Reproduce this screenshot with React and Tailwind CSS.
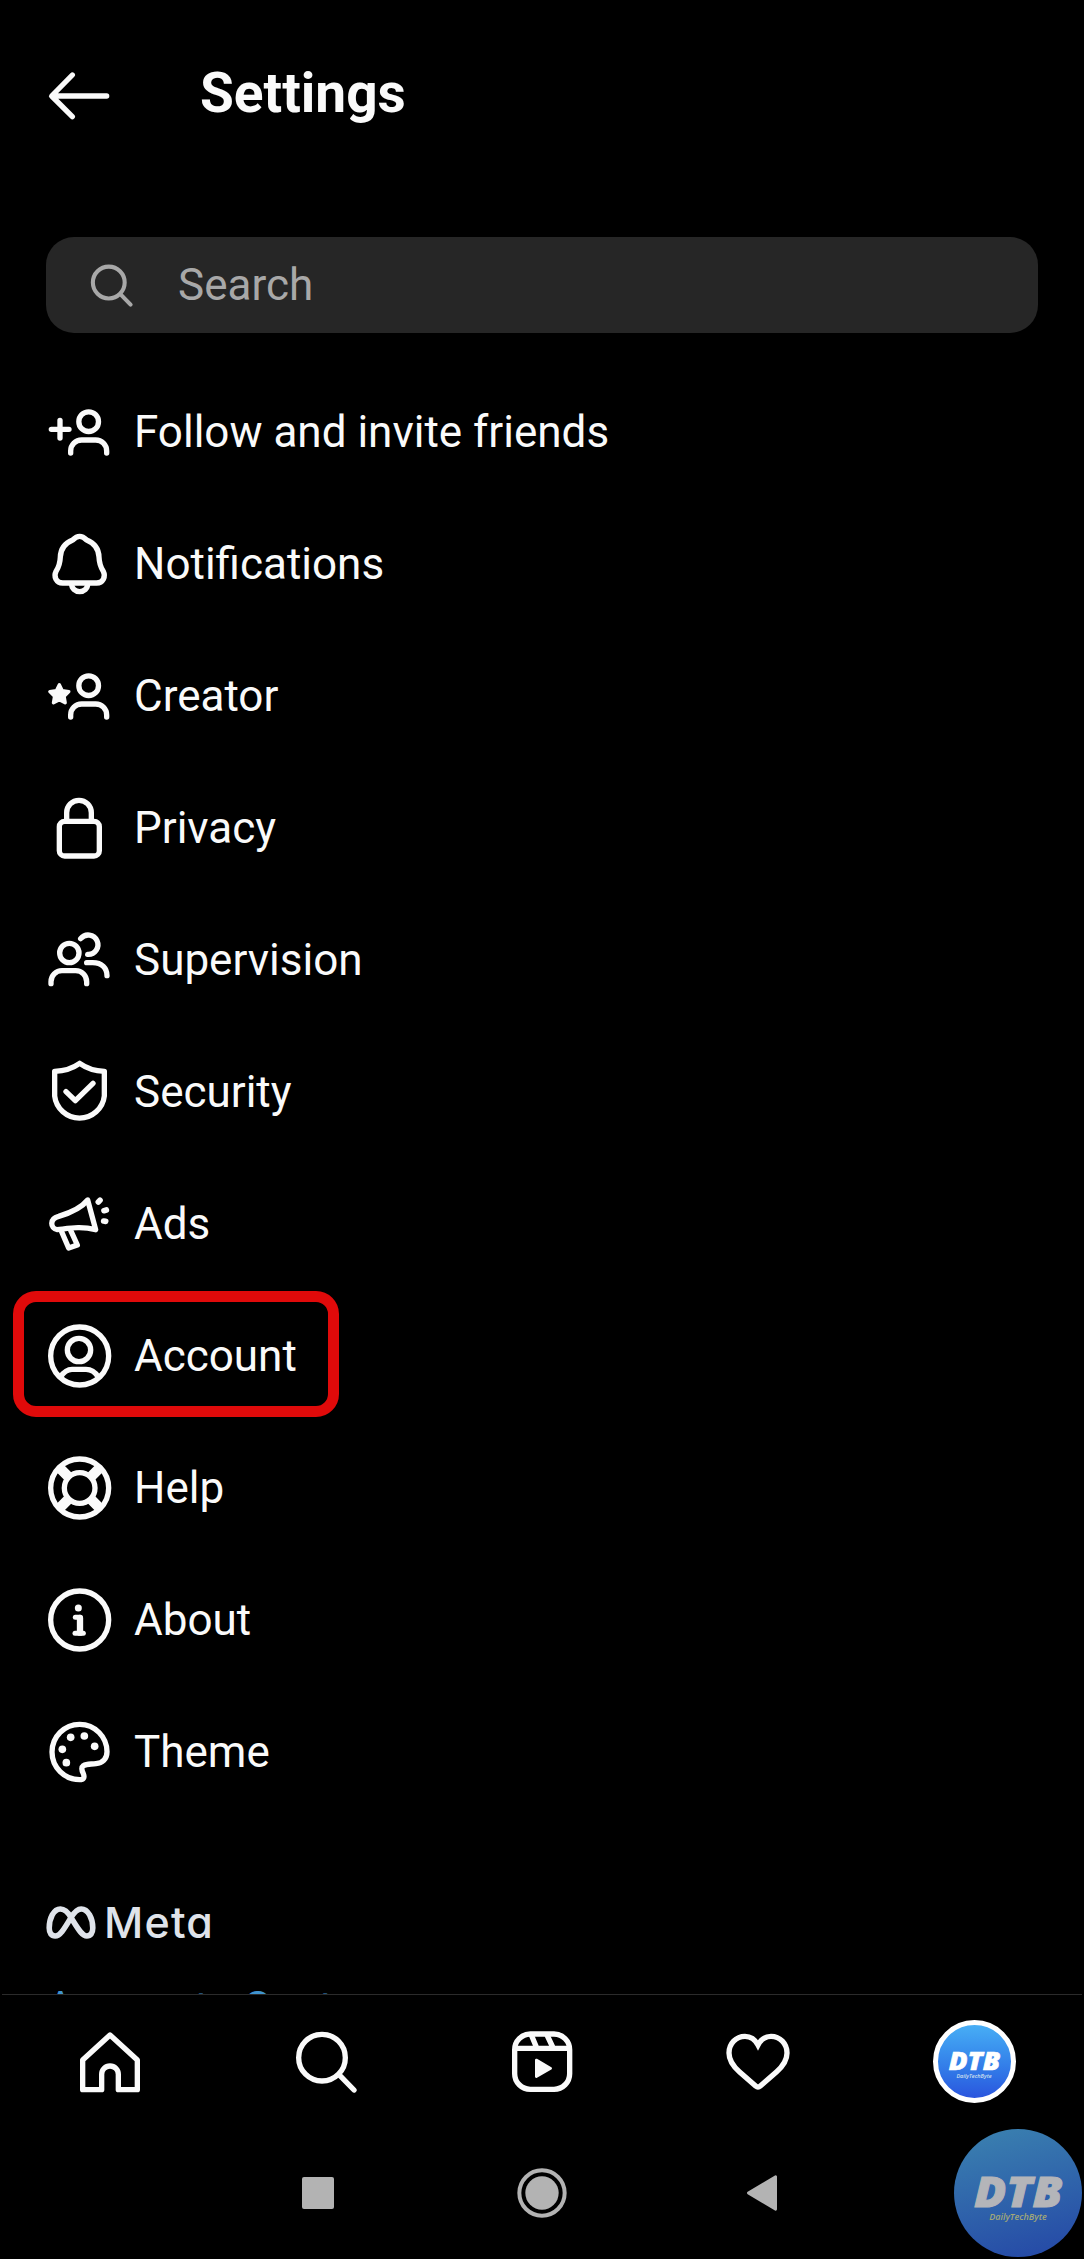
import React from "react";

// Icons are drawn on a 198-unit grid, three units to a pixel.
function Icon({ children, className = "size-[66px]", sw = 16 }) {
  return (
    <svg
      viewBox="0 0 198 198"
      className={`${className} shrink-0`}
      fill="none"
      stroke="currentColor"
      strokeWidth={sw}
      strokeLinecap="round"
      strokeLinejoin="round"
    >
      {children}
    </svg>
  );
}

const Person = () => (
  <>
    <circle cx="128" cy="68" r="29.5" />
    <path d="M74 162V156A33 33 0 0 1 107 123H149A33 33 0 0 1 182 156V162" />
  </>
);

const rows = [
  {
    label: "Follow and invite friends",
    icon: (
      <>
        <Person />
        <path d="M16 91H69M42 64V117" />
      </>
    ),
  },
  {
    label: "Notifications",
    icon: (
      <>
        <path d="M101 16C91 16 86 21 80 27C58 36 44 50 43 78C42 103 36 111 30 121C22 137 31 156 50 156H152C171 156 180 137 172 121C166 111 160 103 159 78C158 50 144 36 122 27C116 21 111 16 101 16Z" />
        <path d="M77 160A24 22 0 0 0 125 160" />
      </>
    ),
  },
  {
    label: "Creator",
    icon: (
      <>
        <Person />
        <path
          d="M40 65L48.8 82.9L68.5 85.7L54.3 99.6L57.6 119.3L40 110L22.4 119.3L25.7 99.6L11.5 85.7L31.2 82.9Z"
          fill="currentColor"
          strokeWidth="10"
        />
      </>
    ),
  },
  {
    label: "Privacy",
    icon: (
      <>
        <rect x="40" y="79" width="120" height="104" rx="16" />
        <path d="M62 79V53A37 37 0 0 1 136 53V79" />
      </>
    ),
  },
  {
    label: "Supervision",
    icon: (
      <>
        <circle cx="70" cy="78" r="29" />
        <path d="M15 170V164A33 33 0 0 1 48 131H89A33 33 0 0 1 122 164V170" />
        <path d="M104 35A29 29 0 1 1 125 82M122 107H140C168 107 183 124 183 146" />
      </>
    ),
  },
  {
    label: "Security",
    icon: (
      <>
        <path d="M101 13C80 28 55 36 26 37V111A75 75 0 0 0 175 111V37C147 36 122 28 101 13Z" />
        <path d="M60 98L88 125L141 73" />
      </>
    ),
  },
  {
    label: "Ads",
    icon: (
      <>
        <path d="M125 27C106 51 72 66 38 76C10 83 12 112 34 116C70 112 104 105 149 116Z" />
        <path d="M46 120L68 171L94 162L74 118" />
        <path d="M157 33L162 28M174 59L181 57M173 90L179 91" strokeWidth="17" />
      </>
    ),
  },
  {
    label: "Account",
    marked: true,
    icon: (
      <>
        <circle cx="101" cy="99" r="87" />
        <circle cx="99" cy="81" r="35" />
        <path d="M44 161C54 146 62 139 78 139H120C136 139 147 146 156 161" />
      </>
    ),
  },
  {
    label: "Help",
    icon: (
      <>
        <circle cx="101" cy="99" r="87" />
        <circle cx="101" cy="99" r="46" />
        <path
          d="M66 64L43 41M136 64L159 41M66 134L43 157M136 134L159 157"
          strokeWidth="31"
          strokeLinecap="butt"
        />
      </>
    ),
  },
  {
    label: "About",
    icon: (
      <>
        <circle cx="101" cy="99" r="87" />
        <circle cx="97" cy="63" r="10.5" fill="currentColor" stroke="none" />
        <path d="M88 91H102" strokeWidth="15" />
        <path d="M102 93V137" strokeWidth="19" />
        <path d="M87 139H112" strokeWidth="15" />
      </>
    ),
  },
  {
    label: "Theme",
    icon: (
      <>
        <path d="M101 16C147 16 183 54 183 98C183 121 168 132 150 134C134 136 122 134 112 140C104 146 108 156 112 164C117 176 112 182 101 182A83 83 0 0 1 101 16Z" />
        <g fill="currentColor" stroke="none">
          <circle cx="49" cy="91" r="11.5" />
          <circle cx="74" cy="55" r="11.5" />
          <circle cx="115" cy="51" r="11.5" />
          <circle cx="146" cy="82" r="11.5" />
          <circle cx="61" cy="131" r="11.5" />
        </g>
      </>
    ),
  },
];

const SearchGlyph = () => (
  <>
    <circle cx="87" cy="86" r="70" />
    <path d="M138 137L183 183" />
  </>
);

export default function App() {
  return (
    <div className="relative flex h-[2259px] w-[1084px] flex-col overflow-hidden bg-black font-['Roboto',sans-serif] text-[#fafafa]">
      <main className="flex h-[1994px] shrink-0 flex-col overflow-hidden px-[46px]">
        <header className="flex h-[192px] shrink-0 items-center">
          <Icon>
            <path d="M18 99H182M79 36L17 99L79 161" />
          </Icon>
          <h1 className="mb-[6px] ml-[88px] text-[55px] leading-[64px] font-bold">Settings</h1>
        </header>

        <div className="mt-[45px] flex h-[96px] shrink-0 items-center rounded-[28px] bg-[#262626] pl-[43px] text-[#a8a8a8]">
          <Icon className="size-[45px]" sw={18}>
            <SearchGlyph />
          </Icon>
          <span className="ml-[44px] text-[44px] leading-[52px]">Search</span>
        </div>

        <ul className="mt-[33px] flex shrink-0 flex-col">
          {rows.map((r) => (
            <li key={r.label} className="relative flex h-[132px] items-center">
              <Icon>{r.icon}</Icon>
              <span className="ml-[22px] text-[44px] leading-[52px]">{r.label}</span>
              {r.marked && (
                <div className="absolute top-[1px] -left-[33px] h-[126px] w-[326px] rounded-[23px] border-[11px] border-[#e00a0a]" />
              )}
            </li>
          ))}
        </ul>

        <div className="mt-[79px] flex h-[50px] shrink-0 items-center text-[#dfe3ea]">
          <svg viewBox="0 0 150 100" className="h-[33px] w-[50px]" fill="none" stroke="currentColor" strokeWidth="17">
            <path d="M75 35C65 17 55 9 43 9C22 9 9 38 9 67C9 83 16 91 27 91C42 91 54 70 75 35C86 17 94 9 106 9C127 9 141 38 141 67C141 83 134 91 123 91C108 91 97 70 75 35Z" />
          </svg>
          <span className="ml-[8px] font-['Inter',sans-serif] text-[43px] leading-[50px] font-medium tracking-[1.2px] [font-feature-settings:'cv11']">
            Meta
          </span>
        </div>
        <div className="mt-[35px] shrink-0 text-[44px] leading-[52px] text-[#3f93cf]">Accounts Center</div>
      </main>

      <nav className="mx-[2px] grid h-[134px] shrink-0 grid-cols-5 items-center justify-items-center border-t border-[#2b2b2b]">
        <Icon>
          <path d="M99 18L17 93V182H74V136A25 25 0 0 1 124 136V182H181V93Z" />
        </Icon>
        <Icon>
          <SearchGlyph />
        </Icon>
        <Icon>
          <rect x="17" y="15" width="165" height="166" rx="47" />
          <path d="M20 58H179M67 18L82 54M114 18L131 54" strokeLinecap="butt" />
          <path d="M82 93L125 118L82 143Z" fill="currentColor" strokeWidth="8" />
        </Icon>
        <Icon>
          <path
            d="M99 48C89 29 75 22 60 22C33 22 12 44 12 72C12 97 26 113 43 128L92 171Q99 177 106 171L155 128C172 113 186 97 186 72C186 44 165 22 138 22C123 22 109 29 99 48Z"
            strokeLinejoin="miter"
          />
        </Icon>
        <div className="flex size-[83px] flex-col items-center justify-center rounded-full border-[5px] border-white bg-linear-to-b from-[#48aef5] to-[#2b55de] font-['Open_Sans',sans-serif] italic text-white">
          <span className="mt-[6px] scale-x-[1.1] text-[25px] leading-[20px] font-extrabold [-webkit-text-stroke:0.6px_currentColor]">
            DTB
          </span>
          <span className="mt-[2px] text-[5.5px] leading-[8px] font-semibold text-[#cfe0ee]">DailyTechByte</span>
        </div>
      </nav>

      <div className="flex h-[129px] shrink-0 items-center text-[#b3b3b3]">
        <div className="ml-[302px] size-[32px] rounded-[2px] bg-current" />
        <svg viewBox="0 0 150 150" className="ml-[183px] size-[50px]">
          <circle cx="75" cy="75" r="68" fill="none" stroke="currentColor" strokeWidth="12" />
          <circle cx="75" cy="75" r="50" fill="currentColor" />
        </svg>
        <svg viewBox="0 0 96 114" className="ml-[179px] h-[38px] w-[32px]">
          <path
            d="M7 57L89 8V106Z"
            fill="currentColor"
            stroke="currentColor"
            strokeWidth="8"
            strokeLinejoin="round"
          />
        </svg>
      </div>

      <div className="absolute top-[2129px] left-[954px] flex size-[128px] flex-col items-center justify-center rounded-full bg-linear-[165deg] from-[#3b83b0] to-[#2446a6] font-['Open_Sans',sans-serif] italic">
        <span className="mt-[10px] scale-x-[1.1] text-[43px] leading-[36px] font-extrabold text-[#b4b5b9] [-webkit-text-stroke:1px_currentColor]">
          DTB
        </span>
        <span className="mt-[2px] text-[9px] leading-[12px] font-semibold text-[#a2a878]">DailyTechByte</span>
      </div>
    </div>
  );
}
